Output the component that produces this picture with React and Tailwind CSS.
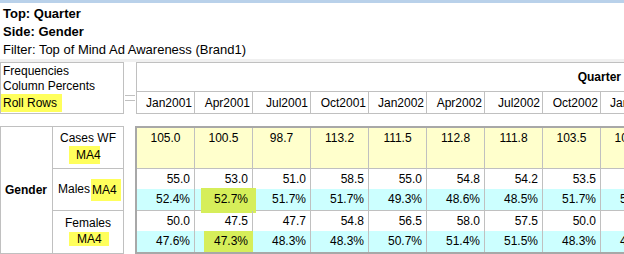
import React from 'react'

const cols = ['Jan2001', 'Apr2001', 'Jul2001', 'Oct2001', 'Jan2002', 'Apr2002', 'Jul2002', 'Oct2002', 'Jan2003']
const cases = ['105.0', '100.5', '98.7', '113.2', '111.5', '112.8', '111.8', '103.5', '104.6']
const males = ['55.0', '53.0', '51.0', '58.5', '55.0', '54.8', '54.2', '53.5', '54.9']
const malesPct = ['52.4%', '52.7%', '51.7%', '51.7%', '49.3%', '48.6%', '48.5%', '51.7%', '52.1%']
const females = ['50.0', '47.5', '47.7', '54.8', '56.5', '58.0', '57.5', '50.0', '50.4']
const femalesPct = ['47.6%', '47.3%', '48.3%', '48.3%', '50.7%', '51.4%', '51.5%', '48.3%', '47.9%']

function Cell({ children, className = '', mark }) {
  return (
    <div className={`relative w-[58px] shrink-0 border-r border-[#c0c0c0] ${className}`}>
      {mark}
      <span className="relative">{children}</span>
    </div>
  )
}

function ValueRow({ values, bg, height, marks = {} }) {
  return (
    <div className={`flex ${bg}`}>
      {values.map((v, i) => (
        <Cell key={i} className={`${height} flex items-center justify-end pr-[4px]`} mark={marks[i]}>
          {v}
        </Cell>
      ))}
    </div>
  )
}

export default function App() {
  return (
    <div
      className="w-[624px] h-[254px] overflow-hidden bg-white text-black"
      style={{ fontFamily: '"Liberation Sans", Arial, sans-serif' }}
    >
      <div className="h-[3px] bg-[#b9d1ea]" />

      {/* Titles */}
      <div className="pt-[2px] pl-[3px] text-[13px] leading-[18px]">
        <div className="font-bold">Top: Quarter</div>
        <div className="font-bold">Side: Gender</div>
        <div>Filter: Top of Mind Ad Awareness (Brand1)</div>
      </div>
      <div className="h-[3px] bg-[#f0f0f0]" />

      {/* Header row */}
      <div className="flex h-[52px]">
        <div className="w-[124px] shrink-0 border border-[#c0c0c0] pt-[1px] text-[12px] leading-[15px]">
          <div className="pl-[2px]">Frequencies</div>
          <div className="pl-[2px]">Column Percents</div>
          <div className="w-[61px] h-[18px] leading-[18px] pl-[2px] bg-[#ffff5c]">Roll Rows</div>
        </div>
        <div className="w-[12px] shrink-0 flex flex-col justify-end pb-[13px] pl-[1px]">
          <div className="w-[10px] h-px bg-[#c0c0c0]" />
          <div className="w-[10px] h-px bg-[#c0c0c0] mt-[4px]" />
        </div>
        <div className="flex-1 min-w-0 overflow-hidden border-t border-l border-[#c0c0c0] text-[12px]">
          <div className="h-[29px] border-b border-[#c0c0c0] flex items-center justify-end pr-[3px] font-bold">
            Quarter
          </div>
          <div className="flex h-[22px] border-b border-[#c0c0c0]">
            {cols.map((c) => (
              <div
                key={c}
                className="w-[58px] shrink-0 border-r border-[#c0c0c0] flex items-center justify-end pr-[2px]"
              >
                {c}
              </div>
            ))}
          </div>
        </div>
      </div>

      <div className="h-[12px]" />

      {/* Body */}
      <div className="flex text-[12px] leading-[15px]">
        <div className="w-[124px] shrink-0 flex border border-[#c0c0c0]">
          <div className="w-[52px] shrink-0 border-r border-[#c0c0c0] flex items-center justify-center font-bold pr-[1px]">
            Gender
          </div>
          <div className="flex-1 flex flex-col">
            <div className="h-[42px] border-b border-[#c0c0c0] flex flex-col pt-[4px]">
              <div className="text-center">Cases WF</div>
              <div className="ml-[16px] w-[31px] h-[18px] leading-[18px] pl-[7px] bg-[#ffff5c]">MA4</div>
            </div>
            <div className="h-[42px] border-b border-[#c0c0c0] flex items-center pl-[5px]">
              <span>Males</span>
              <span className="ml-[1px] w-[30px] h-[22px] leading-[22px] pl-[1px] bg-[#ffff5c]">MA4</span>
            </div>
            <div className="h-[41px] flex flex-col pt-[5px]">
              <div className="text-center">Females</div>
              <div className="ml-[16px] mt-[1px] w-[40px] h-[14px] leading-[14px] pl-[8px] bg-[#ffff5c]">MA4</div>
            </div>
          </div>
        </div>

        <div className="w-[11px] shrink-0" />

        <div className="flex-1 min-w-0 overflow-hidden border-t-2 border-l-2 border-b-2 border-[#a8a8a8]">
          <div className="flex h-[41px] border-b border-[#c0c0c0] bg-[#ffffcc]">
            {cases.map((v, i) => (
              <Cell key={i} className="flex justify-center pt-[3px]">
                {v}
              </Cell>
            ))}
          </div>
          <ValueRow values={males} bg="bg-white" height="h-[20px] pt-[1px]" />
          <div className="border-b border-[#c0c0c0]">
            <ValueRow
              values={malesPct}
              bg="bg-[#ccffff]"
              height="h-[21px]"
              marks={{
                1: <span className="absolute left-[6px] top-[-1px] w-[55px] h-[25px] bg-[#d6ee5a]" />,
              }}
            />
          </div>
          <ValueRow values={females} bg="bg-white" height="h-[20px]" />
          <ValueRow
            values={femalesPct}
            bg="bg-[#ccffff]"
            height="h-[21px]"
            marks={{
              1: <span className="absolute left-[9px] top-0 w-[49px] h-[23px] bg-[#d6ee5a]" />,
            }}
          />
        </div>
      </div>
    </div>
  )
}
